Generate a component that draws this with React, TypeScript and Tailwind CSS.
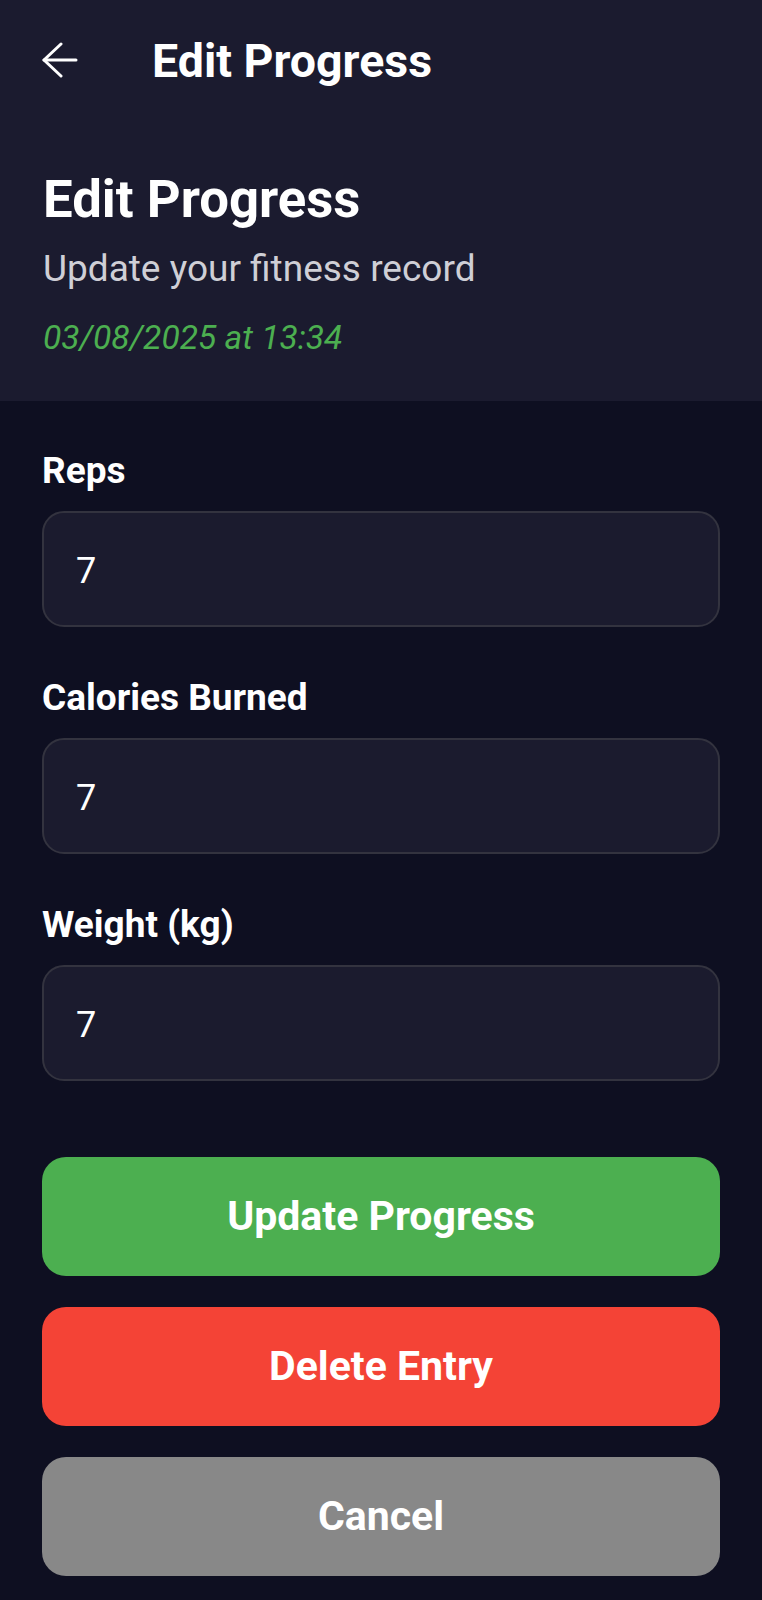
import React from "react";

const FONT = { fontFamily: "Roboto, 'Noto Sans', sans-serif" };

function BackArrow() {
  return (
    <svg width="36" height="36" viewBox="0 0 36 36" fill="none" stroke="white" strokeWidth="3" strokeLinecap="round" strokeLinejoin="round">
      <path d="M34 18H2" />
      <path d="M19 2 2 18l17 16" />
    </svg>
  );
}

function Field({ label, value }: { label: string; value: string }) {
  return (
    <div className="flex flex-col">
      <label className="text-[37px] leading-[40px] font-bold text-white">{label}</label>
      <div className="mt-[20px] h-[116px] rounded-[22px] border-2 border-[#33333f] bg-[#1b1b2e] flex items-center px-[32px]">
        <span className="text-[36px] text-white pt-[3px]">{value}</span>
      </div>
    </div>
  );
}

export default function App() {
  return (
    <div className="min-h-[1600px] w-full bg-[#0e0f21]" style={FONT}>
      {/* app bar + heading share one surface */}
      <div className="bg-[#1b1b2f]">
        <div className="h-[120px] flex items-center px-[42px]">
          <BackArrow />
          <h1 className="ml-[74px] text-[46.5px] font-bold text-white pt-[3px]">Edit Progress</h1>
        </div>
        <div className="px-[43px] pt-[49px] pb-[44px]">
          <h2 className="text-[52.7px] leading-[60px] font-bold text-white">Edit Progress</h2>
          <p className="mt-[18px] text-[37px] leading-[44px] text-[#cfcfd6]">Update your fitness record</p>
          <p className="mt-[28px] text-[33.6px] leading-[38px] italic text-[#4caf50]">03/08/2025 at 13:34</p>
        </div>
      </div>

      <div className="px-[42px] pt-[50px] flex flex-col gap-[51px]">
        <Field label="Reps" value="7" />
        <Field label="Calories Burned" value="7" />
        <Field label="Weight (kg)" value="7" />
      </div>

      <div className="px-[42px] mt-[76px] flex flex-col gap-[31px]">
        <button className="h-[119px] rounded-[24px] bg-[#4caf50] text-white text-[41px] font-bold">Update Progress</button>
        <button className="h-[119px] rounded-[24px] bg-[#f44336] text-white text-[41px] font-bold">Delete Entry</button>
        <button className="h-[119px] rounded-[24px] bg-[#888888] text-white text-[41px] font-bold">Cancel</button>
      </div>
    </div>
  );
}
